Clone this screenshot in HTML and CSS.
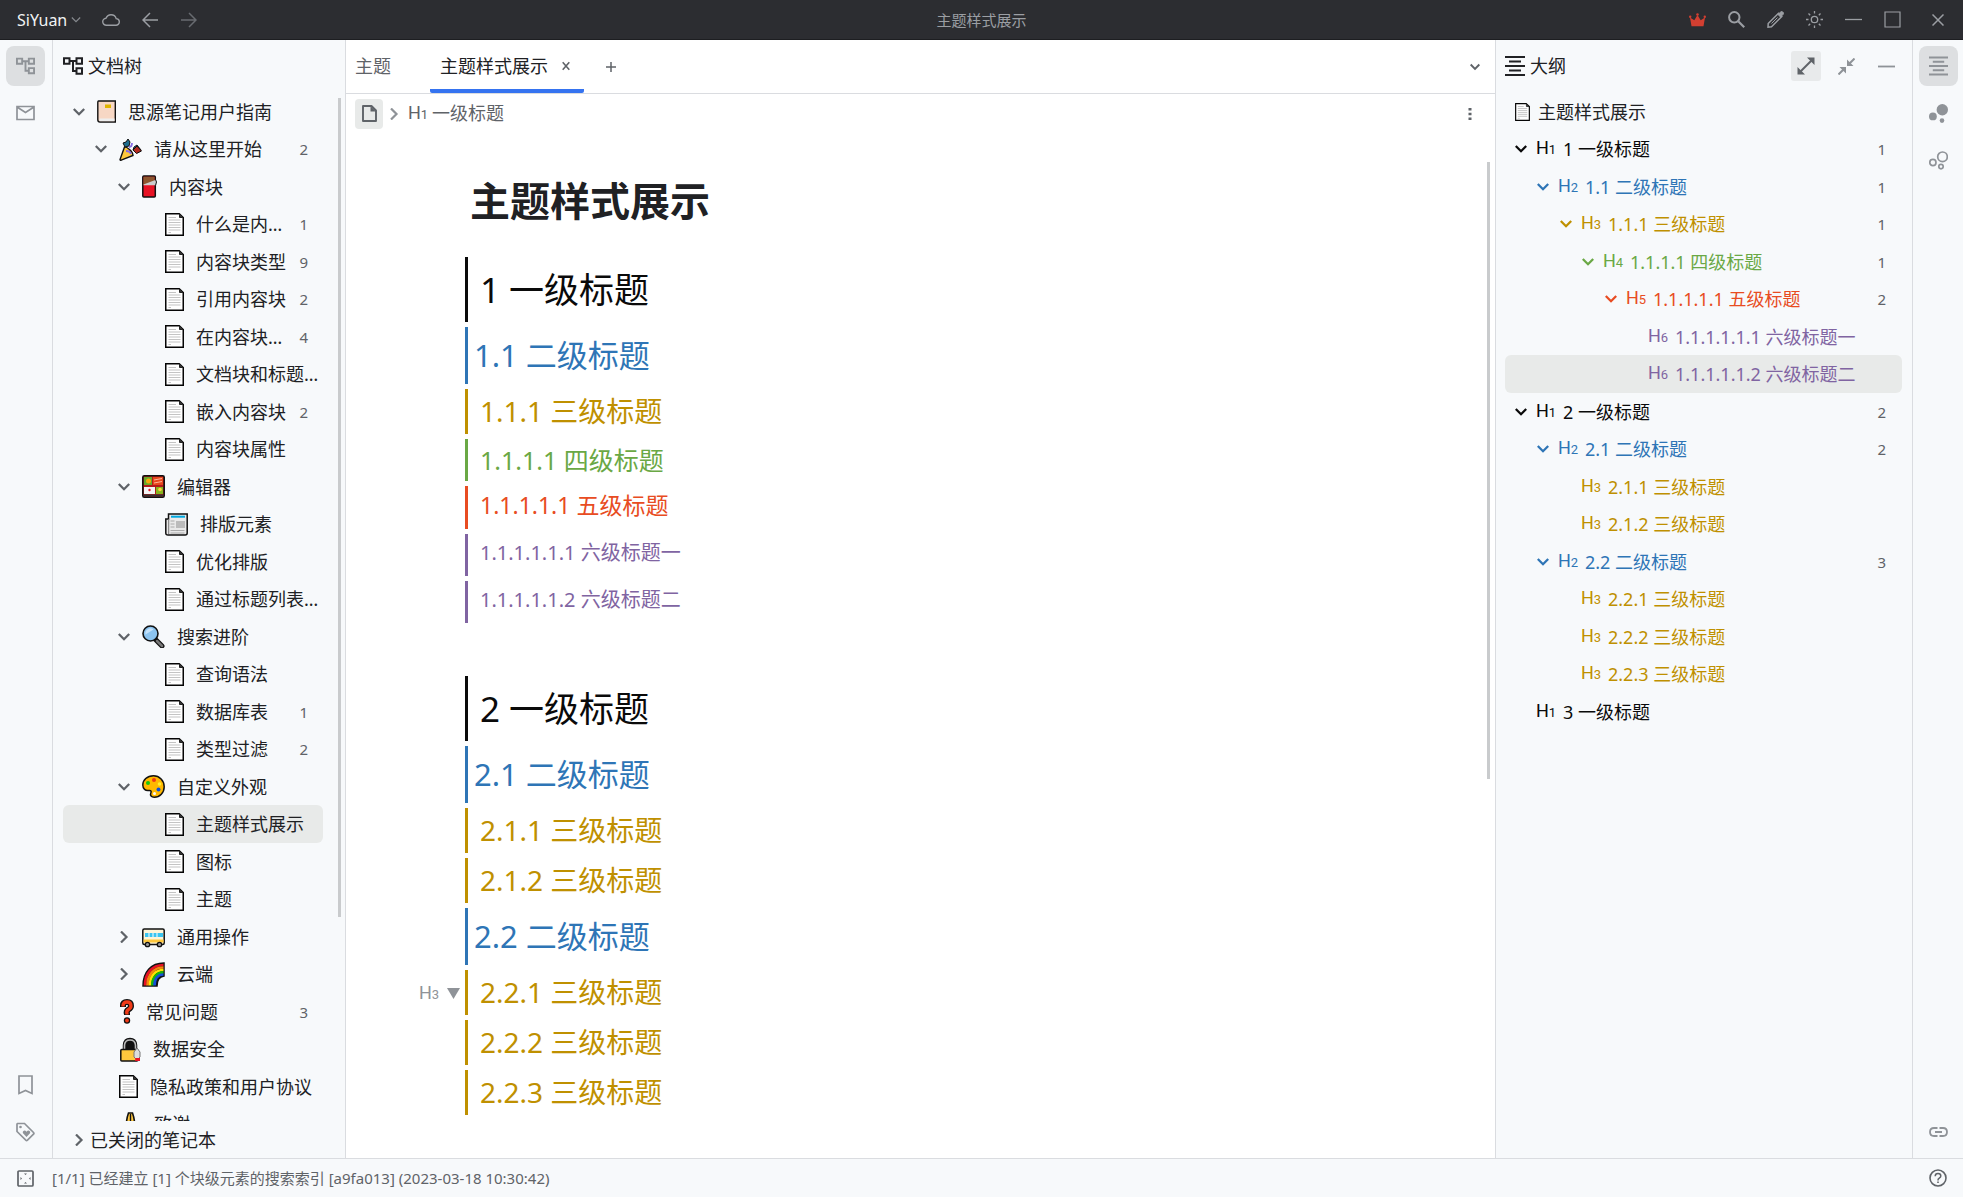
FILE: index.html
```html
<!DOCTYPE html>
<html lang="zh-CN">
<head>
<meta charset="utf-8">
<meta name="viewport" content="width=device-width, initial-scale=1">
<title>主题样式展示 - SiYuan</title>
<link rel="stylesheet" href="styles.css">
</head>
<body>
<svg class="sprite" aria-hidden="true">
  <symbol id="down" viewBox="0 0 12 12"><path d="M.8 3l5.200 5.200L11.200 3" fill="none" stroke="currentColor" stroke-width="2.300"/></symbol>
  <symbol id="right" viewBox="0 0 12 12"><path d="M3 .5L8.500 6 3 11.500" fill="none" stroke="currentColor" stroke-width="2.200"/></symbol>
  <symbol id="tree" viewBox="0 0 20 18"><path d="M1 1.200h5.500v5.500H1zM13.500 1.200H19v5.500h-5.500zM13.500 11.200H19v5.500h-5.500zM6.500 4h7M10 4v10h3.500" fill="none" stroke="currentColor" stroke-width="2"/></symbol>
  <symbol id="outline" viewBox="0 0 20 20"><path d="M0 1h20M4 5.500h12M0 10h20M4 14.500h12M0 19h20" stroke="currentColor" stroke-width="2"/></symbol>
  <symbol id="doc" viewBox="0 0 19 23"><path d="M.75.75h13.500L18.250 4.500v17.750H.75z" fill="#fff" stroke="#050505" stroke-width="1.500"/><path d="M14.500 1v3.500H18" fill="#333" stroke="#222"/><path d="M3.500 4.500H11M3.500 7h12M3.500 9.500h12M3.500 12h12M3.500 14.500h12M3.500 17h12M3.500 19.500H6" stroke="#c4c4c4" stroke-width="1.200"/></symbol>
</svg>

<header class="topbar">
  <div class="top-left">
    <button class="brand">SiYuan <svg width="10" height="10" viewBox="0 0 12 12"><path d="M1 3l5 5 5-5" fill="none" stroke="currentColor" stroke-width="1.500"/></svg></button>
    <button class="top-btn" aria-label="云端同步"><svg width="18" height="12" viewBox="0 0 18 12"><path d="M4.500 11.200h9.300a3.300 3.300 0 0 0 .4-6.600C13.500 2.200 11.500.8 9 .8S4.900 2.100 4 4.200A3.500 3.500 0 0 0 4.500 11.200z" fill="none" stroke="currentColor" stroke-width="1.400"/></svg></button>
    <button class="top-btn" aria-label="后退"><svg width="16" height="16" viewBox="0 0 16 16"><path d="M8 1L1 8l7 7M1 8h15" fill="none" stroke="currentColor" stroke-width="1.500"/></svg></button>
    <button class="top-btn dim" aria-label="前进"><svg width="16" height="16" viewBox="0 0 16 16"><path d="M8 1l7 7-7 7M15 8H0" fill="none" stroke="currentColor" stroke-width="1.500"/></svg></button>
  </div>
  <div class="top-title">主题样式展示</div>
  <div class="top-right">
    <button class="top-btn crown" aria-label="会员"><svg width="17" height="14" viewBox="0 0 17 14"><path d="M2.500 13.200L1 4.500l4.300 2.700L8.500 2l3.200 5.200L16 4.500l-1.500 8.700z" fill="currentColor"/><circle cx="1.200" cy="3.800" r="1.200" fill="currentColor"/><circle cx="8.500" cy="1.500" r="1.300" fill="currentColor"/><circle cx="15.800" cy="3.800" r="1.200" fill="currentColor"/></svg></button>
    <button class="top-btn" aria-label="搜索"><svg width="17" height="17" viewBox="0 0 17 17"><circle cx="6.300" cy="6.300" r="5.200" fill="none" stroke="currentColor" stroke-width="2"/><path d="M10.200 10.200l6 6" stroke="currentColor" stroke-width="2.200"/></svg></button>
    <button class="top-btn" aria-label="编辑"><svg width="17" height="17" viewBox="0 0 17 17"><path d="M1.200 12.500L11.500 2.200l3.300 3.300L4.500 15.800l-3.500.3z" fill="none" stroke="currentColor" stroke-width="1.500"/><path d="M11 3.500L14 .7q.8-.6 1.500.1l.9.9q.6.700 0 1.400L13.500 6zM4.500 12.500l6-6" fill="currentColor" stroke="currentColor"/></svg></button>
    <button class="top-btn" aria-label="外观"><svg width="17" height="17" viewBox="0 0 17 17" fill="none" stroke="currentColor" stroke-width="1.300"><circle cx="8.500" cy="8.500" r="3.200"/><path d="M8.500 0v2.500M8.500 14.500V17M0 8.500h2.500M14.500 8.500H17M2.500 2.500l1.700 1.700M12.800 12.800l1.700 1.700M2.500 14.500l1.700-1.700M12.800 4.200l1.700-1.700"/></svg></button>
    <button class="top-btn" aria-label="最小化"><svg width="17" height="17" viewBox="0 0 17 17"><path d="M0 8.500h17" stroke="currentColor" stroke-width="1.300"/></svg></button>
    <button class="top-btn" aria-label="最大化"><svg width="17" height="17" viewBox="0 0 17 17"><path d="M1 1h15v15H1z" fill="none" stroke="currentColor" stroke-width="1.200"/></svg></button>
    <button class="top-btn close" aria-label="关闭"><svg width="12" height="12" viewBox="0 0 12 12"><path d="M.5.5l11 11M11.500.5l-11 11" stroke="currentColor" stroke-width="1.500"/></svg></button>
  </div>
</header>

<div class="workspace">
  <nav class="dock" aria-label="左侧栏">
    <button class="dock-btn active" aria-label="文档树"><svg width="19" height="18"><use href="#tree"/></svg></button>
    <button class="dock-btn" aria-label="收集箱"><svg width="19" height="16" viewBox="0 0 19 16"><path d="M1 1.500h17v13H1zM1 2l8.500 5.500L18 2" fill="none" stroke="currentColor" stroke-width="1.700"/></svg></button>
    <span class="spacer"></span>
    <button class="dock-btn" aria-label="书签"><svg width="15" height="20" viewBox="0 0 15 20"><path d="M1 1h13v17.500l-6.500-3-6.500 3z" fill="none" stroke="currentColor" stroke-width="1.700"/></svg></button>
    <button class="dock-btn" aria-label="标签"><svg width="19" height="20" viewBox="0 0 19 20"><path d="M1.500 1.500H8.500L17.500 10.500q.8.900 0 1.700l-6 6q-.9.700-1.700 0L1 9.500V2z" fill="none" stroke="currentColor" stroke-width="1.700"/><circle cx="4.500" cy="5" r="1.300" fill="currentColor"/><path d="M10.500 15L7 11.200q-.8-1.400.4-2.300 1.600-.9 3.100.8 1.500-1.700 3.100-.8 1.200.9.400 2.300z" fill="currentColor"/></svg></button>
  </nav>

  <aside class="files">
    <header class="panel-head"><svg width="20" height="18"><use href="#tree"/></svg><h2>文档树</h2></header>
    <ul class="rows tree">
      <li class="row"><svg class="arrow" width="12" height="12"><use href="#down"/></svg><svg class="emoji" width="19" height="23" viewBox="0 0 19 23"><path d="M1.500 1h16.800v21H3q-2.200 0-2.200-2.200V3q0-2 .7-2z" fill="#f7d7c4" stroke="#111" stroke-width="1.400"/><path d="M2.500 18.500h15v2.700H2.500z" fill="#eee"/><rect x="8" y="4.500" width="6" height="3.500" fill="#e0b400"/></svg><span class="name">思源笔记用户指南</span></li>
      <li class="row d1"><svg class="arrow" width="12" height="12"><use href="#down"/></svg><svg class="emoji" width="23" height="23" viewBox="0 0 23 23"><path d="M5.500 9L1 21.500q0 1 1.200.7L14 17.500q0-3-3.500-6T5.500 9z" fill="#ffc83d" stroke="#111" stroke-width="1.400"/><path d="M4 5l3-1 2-3 2 3-1 4-4 1zM14 12l1-3 3-2 4 5-4 3z" fill="#1d6d8e" stroke="#111"/><path d="M14 12l4-4 4.500 5-5 2.500z" fill="#b3281e" stroke="#111"/><path d="M10 9q3 0 3-4M7 13q4 0 5 3" fill="none" stroke="#886ce4" stroke-width="1.800"/></svg><span class="name">请从这里开始</span><span class="count">2</span></li>
      <li class="row d2"><svg class="arrow" width="12" height="12"><use href="#down"/></svg><svg class="emoji" width="15" height="23" viewBox="0 0 15 23"><rect x=".8" y="1" width="12.500" height="21" rx="1" fill="#e81224" stroke="#111" stroke-width="1.500"/><path d="M1.500 1.700h11v6l-11 2z" fill="#8e562e"/><path d="M1.500 9.500L14 4.700v5.500H1.500z" fill="#ccc"/><path d="M13.500 4.500q2 2 0 6" fill="none" stroke="#111"/></svg><span class="name">内容块</span></li>
      <li class="row d3"><svg class="emoji" width="19" height="23"><use href="#doc"/></svg><span class="name">什么是内…</span><span class="count">1</span></li>
      <li class="row d3"><svg class="emoji" width="19" height="23"><use href="#doc"/></svg><span class="name">内容块类型</span><span class="count">9</span></li>
      <li class="row d3"><svg class="emoji" width="19" height="23"><use href="#doc"/></svg><span class="name">引用内容块</span><span class="count">2</span></li>
      <li class="row d3"><svg class="emoji" width="19" height="23"><use href="#doc"/></svg><span class="name">在内容块…</span><span class="count">4</span></li>
      <li class="row d3"><svg class="emoji" width="19" height="23"><use href="#doc"/></svg><span class="name">文档块和标题…</span></li>
      <li class="row d3"><svg class="emoji" width="19" height="23"><use href="#doc"/></svg><span class="name">嵌入内容块</span><span class="count">2</span></li>
      <li class="row d3"><svg class="emoji" width="19" height="23"><use href="#doc"/></svg><span class="name">内容块属性</span></li>
      <li class="row d2"><svg class="arrow" width="12" height="12"><use href="#down"/></svg><svg class="emoji" width="23" height="23" viewBox="0 0 23 23"><rect x=".8" y=".8" width="21.400" height="21.400" rx="1.500" fill="#b31b1b" stroke="#111" stroke-width="1.600"/><path d="M2 2h8v8H2z" fill="#6aa82a"/><path d="M11 2h10v8H11z" fill="#e8461c"/><path d="M2 12h11v7H2z" fill="#f5f5f5"/><path d="M14 12h7v7h-7z" fill="#86b51d"/><path d="M1.500 19.500h20v2h-20z" fill="#333"/><circle cx="6.500" cy="6" r="2.500" fill="#f7a70a"/><circle cx="7.500" cy="15" r="1.200" fill="#e81224"/><circle cx="18" cy="14.500" r="1.800" fill="#ffd23d"/><path d="M12 5l8-1.500M12 8l8-1.500" stroke="#ffb49a"/></svg><span class="name">编辑器</span></li>
      <li class="row d3"><svg class="emoji" width="23" height="23" viewBox="0 0 23 23"><path d="M3.500 1h18.700v19q0 2-2 2H3q-2.200 0-2.200-2V6h2.700z" fill="#e9e9e9" stroke="#111" stroke-width="1.500"/><path d="M6 3.700h14" stroke="#00a8e0" stroke-width="2"/><path d="M5.500 8h4M5.500 11h4M5.500 14h4M5.500 17.500h14M5.500 20h14" stroke="#aaa"/><path d="M11 8h9v7h-9z" fill="#bbb"/><path d="M3.700 6v15" stroke="#777"/></svg><span class="name">排版元素</span></li>
      <li class="row d3"><svg class="emoji" width="19" height="23"><use href="#doc"/></svg><span class="name">优化排版</span></li>
      <li class="row d3"><svg class="emoji" width="19" height="23"><use href="#doc"/></svg><span class="name">通过标题列表…</span></li>
      <li class="row d2"><svg class="arrow" width="12" height="12"><use href="#down"/></svg><svg class="emoji" width="23" height="23" viewBox="0 0 23 23"><path d="M12.500 13.500l7.500 7.500" stroke="#111" stroke-width="5" stroke-linecap="round"/><path d="M15 16l5 5" stroke="#777" stroke-width="2.500" stroke-linecap="round"/><circle cx="8.500" cy="8.500" r="7.500" fill="#8cc4f0" stroke="#111" stroke-width="1.600"/><path d="M3.500 9.500a5 5 0 0 1 8-5z" fill="#c4e2fa"/></svg><span class="name">搜索进阶</span></li>
      <li class="row d3"><svg class="emoji" width="19" height="23"><use href="#doc"/></svg><span class="name">查询语法</span></li>
      <li class="row d3"><svg class="emoji" width="19" height="23"><use href="#doc"/></svg><span class="name">数据库表</span><span class="count">1</span></li>
      <li class="row d3"><svg class="emoji" width="19" height="23"><use href="#doc"/></svg><span class="name">类型过滤</span><span class="count">2</span></li>
      <li class="row d2"><svg class="arrow" width="12" height="12"><use href="#down"/></svg><svg class="emoji" width="23" height="23" viewBox="0 0 23 23"><path d="M11.500.8C5 .8.8 5 .8 10c0 4 2.700 6 6 5.500 2-.3 3 .5 2 2.500-1 2.500.5 4.200 3.500 4.200 5.500 0 9.900-4.500 9.900-10.500S17.500.8 11.500.8z" fill="#ffb900" stroke="#111" stroke-width="1.500"/><circle cx="6" cy="8" r="2" fill="#16c60c"/><circle cx="12" cy="5" r="2" fill="#f03a17"/><circle cx="17.500" cy="9" r="1.800" fill="#ffef30"/><circle cx="16.500" cy="14.500" r="2" fill="#0f50d8"/><circle cx="12.500" cy="18.500" r="1.500" fill="#f7f8fa"/></svg><span class="name">自定义外观</span></li>
      <li class="row d3 selected"><svg class="emoji" width="19" height="23"><use href="#doc"/></svg><span class="name">主题样式展示</span></li>
      <li class="row d3"><svg class="emoji" width="19" height="23"><use href="#doc"/></svg><span class="name">图标</span></li>
      <li class="row d3"><svg class="emoji" width="19" height="23"><use href="#doc"/></svg><span class="name">主题</span></li>
      <li class="row d2"><svg class="arrow" width="12" height="12"><use href="#right"/></svg><svg class="emoji" width="23" height="23" viewBox="0 0 23 23"><rect x=".8" y="4" width="21.400" height="15.500" rx="1.500" fill="#fff5d8" stroke="#111" stroke-width="1.500"/><path d="M3 8h18v4H3z" fill="#3bc5f0"/><path d="M7 8v4M11 8v4M15 8v4" stroke="#fff"/><path d="M1.600 14.500h20v3h-20z" fill="#ffc83d"/><circle cx="5.500" cy="19.500" r="2.200" fill="#999" stroke="#111" stroke-width="1.300"/><circle cx="17.500" cy="19.500" r="2.200" fill="#999" stroke="#111" stroke-width="1.300"/></svg><span class="name">通用操作</span></li>
      <li class="row d2"><svg class="arrow" width="12" height="12"><use href="#right"/></svg><svg class="emoji" width="23" height="25" viewBox="0 0 23 25"><path d="M1 24C1 10 9 1 22 1v13q-7 1-7 10z" fill="#111" stroke="#111" stroke-width="1.500"/><g fill="none" stroke-width="2.700"><path d="M3 23.500C3 11 10 3 21.500 3" stroke="#e81224"/><path d="M5.500 23.500C5.500 12.500 12 5.500 21.500 5.500" stroke="#f7830f"/><path d="M8 23.500C8 14 13.500 8 21.500 8" stroke="#ffe100"/><path d="M10.300 23.500C10.300 15.500 15 10.300 21.500 10.300" stroke="#16b50c"/><path d="M12.500 23.500C12.500 16.500 16 12.500 21.500 12.500" stroke="#1550d8"/></g></svg><span class="name">云端</span></li>
      <li class="row d1"><i class="arrow"></i><svg class="emoji" width="15" height="25" viewBox="0 0 15 25"><g transform="translate(1 0)"><path d="M3 8V6.500Q3 3 7 3t4 4q0 2-2.500 3.500T7 15v1" fill="none" stroke="#111" stroke-width="6"/><circle cx="7" cy="21.500" r="3.200" fill="#111"/><path d="M3 7.500V6.500Q3 3 7 3t4 4q0 2-2.500 3.500T7 15v.500" fill="none" stroke="#f03a17" stroke-width="3.300"/><circle cx="7" cy="21.500" r="1.900" fill="#f03a17"/></g></svg><span class="name">常见问题</span><span class="count">3</span></li>
      <li class="row d1"><i class="arrow"></i><svg class="emoji" width="22" height="25" viewBox="0 0 22 25"><g transform="translate(1 0)"><path d="M3.500 13V8Q4 1.500 10 1.500T16.500 8v5z" fill="#111" stroke="#111" stroke-width="1.500"/><path d="M4.500 12V8Q5 3 10 3t5.500 5v4" fill="none" stroke="#bbb" stroke-width="1.600"/><rect x=".8" y="12.500" width="17" height="11.500" rx="1" fill="#ffc83d" stroke="#111" stroke-width="1.500"/><path d="M17 11l3 4v5l-3 3-3-3v-5z" fill="#ddd" stroke="#777"/><path d="M15.500 21h4.500v3h-5z" fill="#e81224"/></g></svg><span class="name">数据安全</span></li>
      <li class="row d1"><i class="arrow"></i><svg class="emoji" width="19" height="23"><use href="#doc"/></svg><span class="name">隐私政策和用户协议</span></li>
      <li class="row d1"><i class="arrow"></i><svg class="emoji" width="23" height="25" viewBox="0 0 23 25"><path d="M11.500 1H9.500Q8 5 7.500 10L3 20l3 4h11l3-4-4.500-10Q15 5 13.500 1z" fill="#ffc83d" stroke="#111" stroke-width="1.600"/><path d="M11.500 2v18" stroke="#111" stroke-width="1.400"/></svg><span class="name">致谢</span></li>
    </ul>
    <button class="closed"><svg width="12" height="12"><use href="#right"/></svg>已关闭的笔记本</button>
    <span class="thumb"></span>
  </aside>

  <main class="editor">
    <div class="tabs" role="tablist">
      <button class="tab" role="tab">主题</button>
      <button class="tab current" role="tab" aria-selected="true">主题样式展示 <svg width="8" height="10" viewBox="0 0 8 10"><path d="M.7 1.200l6.600 7.600M7.300 1.200L.7 8.800" stroke="currentColor" stroke-width="1.600"/></svg></button>
      <button class="icon-btn add" aria-label="新建"><svg width="10" height="10" viewBox="0 0 10 10"><path d="M5 0v10M0 5h10" stroke="currentColor" stroke-width="1.500"/></svg></button>
      <span class="spacer"></span>
      <button class="icon-btn" aria-label="切换页签"><svg width="10" height="10"><use href="#down" width="10" height="10"/></svg></button>
    </div>
    <div class="crumbs">
      <button class="doc-btn" aria-label="文档"><svg width="15" height="17" viewBox="0 0 15 17"><path d="M1 1h8.500L14 5.500V16H1z" fill="none" stroke="currentColor" stroke-width="1.900" stroke-linejoin="round"/><path d="M8.500 1v5.500H14z" fill="currentColor"/></svg></button>
      <svg class="sep" width="12" height="12"><use href="#right"/></svg>
      <a class="crumb" href="#h1"><span class="hl">H<small>1</small></span>一级标题</a>
      <span class="spacer"></span>
      <button class="icon-btn" aria-label="更多"><svg width="4" height="12" viewBox="0 0 4 12"><path d="M.5 0h3v2.600h-3zM.5 4.700h3v2.600h-3zM.5 9.400h3V12h-3z" fill="currentColor"/></svg></button>
    </div>
    <article class="content">
      <h1 class="title">主题样式展示</h1>
      <h1 class="h l1" id="h1">1 一级标题</h1>
      <h2 class="h l2">1.1 二级标题</h2>
      <h3 class="h l3">1.1.1 三级标题</h3>
      <h4 class="h l4">1.1.1.1 四级标题</h4>
      <h5 class="h l5">1.1.1.1.1 五级标题</h5>
      <h6 class="h l6">1.1.1.1.1.1 六级标题一</h6>
      <h6 class="h l6">1.1.1.1.1.2 六级标题二</h6>
      <p class="blank"></p>
      <h1 class="h l1">2 一级标题</h1>
      <h2 class="h l2">2.1 二级标题</h2>
      <h3 class="h l3">2.1.1 三级标题</h3>
      <h3 class="h l3">2.1.2 三级标题</h3>
      <h2 class="h l2">2.2 二级标题</h2>
      <h3 class="h l3">2.2.1 三级标题<span class="gutter"><span class="hl">H<small>3</small></span><svg width="13" height="11" viewBox="0 0 13 11"><path d="M0 0h13L6.500 11z" fill="currentColor"/></svg></span></h3>
      <h3 class="h l3">2.2.2 三级标题</h3>
      <h3 class="h l3">2.2.3 三级标题</h3>
    </article>
    <span class="thumb"></span>
  </main>

  <aside class="outline">
    <header class="panel-head">
      <svg width="20" height="20"><use href="#outline"/></svg><h2>大纲</h2>
      <span class="spacer"></span>
      <button class="tool on" aria-label="展开"><svg width="18" height="18" viewBox="0 0 18 18"><path d="M10 .5h7.500V8zM.5 10v7.500H8z" fill="currentColor"/><path d="M15 3L3 15" stroke="currentColor" stroke-width="2"/></svg></button>
      <button class="tool" aria-label="折叠"><svg width="17" height="17" viewBox="0 0 17 17"><path d="M9 1.500V8h6.500zM1.500 9H8v6.500z" fill="currentColor"/><path d="M16.500.5L10.500 6.500M.5 16.500l6-6" stroke="currentColor" stroke-width="2"/></svg></button>
      <button class="tool" aria-label="最小化"><svg width="17" height="17" viewBox="0 0 17 17"><path d="M0 8.500h17" stroke="currentColor" stroke-width="1.800"/></svg></button>
    </header>
    <ul class="rows">
      <li class="row root"><svg width="15" height="18"><use href="#doc"/></svg><span class="name">主题样式展示</span></li>
      <li class="row c1"><svg class="arrow" width="12" height="12"><use href="#down"/></svg><span class="hl">H<small>1</small></span><span class="name">1 一级标题</span><span class="count">1</span></li>
      <li class="row d1 c2"><svg class="arrow" width="12" height="12"><use href="#down"/></svg><span class="hl">H<small>2</small></span><span class="name">1.1 二级标题</span><span class="count">1</span></li>
      <li class="row d2 c3"><svg class="arrow" width="12" height="12"><use href="#down"/></svg><span class="hl">H<small>3</small></span><span class="name">1.1.1 三级标题</span><span class="count">1</span></li>
      <li class="row d3 c4"><svg class="arrow" width="12" height="12"><use href="#down"/></svg><span class="hl">H<small>4</small></span><span class="name">1.1.1.1 四级标题</span><span class="count">1</span></li>
      <li class="row d4 c5"><svg class="arrow" width="12" height="12"><use href="#down"/></svg><span class="hl">H<small>5</small></span><span class="name">1.1.1.1.1 五级标题</span><span class="count">2</span></li>
      <li class="row d5 c6"><i class="arrow"></i><span class="hl">H<small>6</small></span><span class="name">1.1.1.1.1.1 六级标题一</span></li>
      <li class="row d5 c6 selected"><i class="arrow"></i><span class="hl">H<small>6</small></span><span class="name">1.1.1.1.1.2 六级标题二</span></li>
      <li class="row c1"><svg class="arrow" width="12" height="12"><use href="#down"/></svg><span class="hl">H<small>1</small></span><span class="name">2 一级标题</span><span class="count">2</span></li>
      <li class="row d1 c2"><svg class="arrow" width="12" height="12"><use href="#down"/></svg><span class="hl">H<small>2</small></span><span class="name">2.1 二级标题</span><span class="count">2</span></li>
      <li class="row d2 c3"><i class="arrow"></i><span class="hl">H<small>3</small></span><span class="name">2.1.1 三级标题</span></li>
      <li class="row d2 c3"><i class="arrow"></i><span class="hl">H<small>3</small></span><span class="name">2.1.2 三级标题</span></li>
      <li class="row d1 c2"><svg class="arrow" width="12" height="12"><use href="#down"/></svg><span class="hl">H<small>2</small></span><span class="name">2.2 二级标题</span><span class="count">3</span></li>
      <li class="row d2 c3"><i class="arrow"></i><span class="hl">H<small>3</small></span><span class="name">2.2.1 三级标题</span></li>
      <li class="row d2 c3"><i class="arrow"></i><span class="hl">H<small>3</small></span><span class="name">2.2.2 三级标题</span></li>
      <li class="row d2 c3"><i class="arrow"></i><span class="hl">H<small>3</small></span><span class="name">2.2.3 三级标题</span></li>
      <li class="row c1"><i class="arrow"></i><span class="hl">H<small>1</small></span><span class="name">3 一级标题</span></li>
    </ul>
  </aside>

  <nav class="dock dock-right" aria-label="右侧栏">
    <button class="dock-btn active" aria-label="大纲"><svg width="19" height="20"><use href="#outline" width="19" height="20"/></svg></button>
    <button class="dock-btn" aria-label="关系图"><svg width="19" height="19" viewBox="0 0 19 19" fill="currentColor"><circle cx="13.300" cy="5.800" r="5.700"/><circle cx="3.900" cy="12.400" r="3.900"/><circle cx="13" cy="16.600" r="2.300"/></svg></button>
    <button class="dock-btn" aria-label="全局关系图"><svg width="19" height="19" viewBox="0 0 19 19" fill="none" stroke="currentColor" stroke-width="1.700"><circle cx="13.500" cy="5.800" r="4.800"/><circle cx="3.900" cy="11.500" r="3.100"/><circle cx="12" cy="15.600" r="2.200"/></svg></button>
    <span class="spacer"></span>
    <button class="dock-btn" aria-label="反向链接"><svg width="19" height="10" viewBox="0 0 19 10"><path d="M8.500 1H5Q1 1 1 5t4 4h3.500M10.500 1H14q4 0 4 4t-4 4h-3.500M6 5h7" fill="none" stroke="currentColor" stroke-width="1.800"/></svg></button>
  </nav>
</div>

<footer class="status">
  <button class="status-btn" aria-label="停靠栏"><svg width="17" height="17" viewBox="0 0 17 17"><rect x="1" y="1" width="15" height="15" rx="1" fill="none" stroke="currentColor" stroke-width="1.700"/><path d="M7 3.500h3L8.500 5zM7 13.500h3L8.500 12zM3.500 7v3L5 8.500zM13.500 7v3L12 8.500z" fill="currentColor"/></svg></button>
  <span>[1/1] 已经建立 [1] 个块级元素的搜索索引 [a9fa013] (2023-03-18 10:30:42)</span>
  <span class="spacer"></span>
  <button class="status-btn" aria-label="帮助"><svg width="18" height="18" viewBox="0 0 18 18"><circle cx="9" cy="9" r="8" fill="none" stroke="currentColor" stroke-width="1.600"/><path d="M6.200 7.200Q6.200 4.500 9 4.500t2.800 2.500Q11.800 8.300 10.300 9.200T9 11.500" fill="none" stroke="currentColor" stroke-width="1.500"/><path d="M8.200 12.500h1.600v1.600H8.200z" fill="currentColor"/></svg></button>
</footer>
</body>
</html>
```
FILE: styles.css
```css
:root {
  --panel: #f7f9fb;
  --line: #dadce0;
  --text: #202124;
  --muted: #5f6368;
  --icon: #8f9398;
  --select: #e8eae9;
  --h1: #0a0a0a;
  --h2: #2e75b6;
  --h3: #bf9000;
  --h4: #6aa845;
  --h5: #e84c22;
  --h6: #8064a2;
}

* { box-sizing: border-box; }

body {
  margin: 0;
  height: 100vh;
  display: flex;
  flex-direction: column;
  overflow: hidden;
  background: #fff;
  color: var(--text);
  font-family: "Noto Sans", "Noto Sans CJK SC", sans-serif;
  font-size: 18px;
  line-height: 26px;
}

button {
  margin: 0;
  padding: 0;
  border: 0;
  background: none;
  color: inherit;
  font: inherit;
  display: flex;
  align-items: center;
  justify-content: center;
  white-space: nowrap;
}

svg { flex: none; display: block; }
.sprite { display: none; }
.spacer { flex: 1; }

/* Title bar */
.topbar {
  flex: none;
  height: 40px;
  display: grid;
  grid-template-columns: 1fr auto 1fr;
  align-items: center;
  background: #2c2d31;
  border-bottom: 1px solid #1d1e21;
  color: #9b9ea3;
}
.top-left, .top-right { display: flex; align-items: center; }
.top-left { padding-left: 17px; }
.top-right { justify-content: flex-end; padding-right: 7px; }
.brand { gap: 4px; color: #f1f3f4; font-size: 16px; margin-right: 10px; }
.brand svg { color: #85888d; }
.top-btn { width: 39px; height: 38px; }
.top-btn.dim { color: #686b70; }
.top-btn.crown { color: #d23f31; }
.top-btn.close { width: 36px; margin-left: 8px; }
.top-title { font-size: 15px; }

.workspace { flex: 1; min-height: 0; display: flex; }

/* Docks */
.dock {
  flex: none;
  width: 53px;
  display: flex;
  flex-direction: column;
  gap: 7px;
  padding: 6px 7px 6px 6px;
  background: var(--panel);
  border-right: 1px solid var(--line);
}
.dock-right { width: 51px; padding: 6px 5px 6px 6px; border-right: 0; border-left: 1px solid var(--line); }
.dock-btn { width: 39px; height: 40px; border-radius: 8px; color: var(--icon); }
.dock-btn.active { background: #dddfe1; }

/* Side panels */
.files, .outline {
  flex: none;
  display: flex;
  flex-direction: column;
  background: var(--panel);
}
.files { position: relative; width: 293px; border-right: 1px solid var(--line); }
.outline { width: 417px; border-left: 1px solid var(--line); }

.panel-head {
  flex: none;
  height: 53px;
  display: flex;
  align-items: center;
  gap: 5px;
  padding: 0 10px 1px;
}
.panel-head h2 { margin: 0; font-size: 18px; font-weight: 400; }
.tool { width: 30px; height: 30px; margin-left: 5px; border-radius: 3px; color: var(--icon); }
.tool.on { background: #e8eaeb; color: var(--muted); }

.rows { list-style: none; margin: 0; padding: 0 10px; }
.tree { flex: 1; min-height: 0; overflow: hidden; padding-right: 22px; }
.row {
  height: 37px;
  display: flex;
  align-items: center;
  padding: 0 15px 0 10px;
  border-radius: 6px;
  white-space: nowrap;
}
.row:nth-child(even) { height: 38px; }
.row.selected { background: var(--select); }
.arrow { flex: none; width: 12px; margin-right: 12px; color: var(--muted); }
.emoji { margin-right: 12px; }
.name { flex: 1; }
.count { color: var(--muted); font-size: 15px; }
.row.d1 { padding-left: 32px; }
.row.d2 { padding-left: 55px; }
.row.d3 { padding-left: 77px; }
.row.d4 { padding-left: 100px; }
.row.d5 { padding-left: 122px; }
.tree .row.d3 { padding-left: 102px; padding-right: 0; }
.tree .row.d3 .count { margin-right: 15px; }

.outline .panel-head { padding: 0 11px 1px 9px; }
.outline .rows { padding-left: 9px; }
.outline .row { padding-right: 16px; }
.outline .arrow { margin-right: 9px; color: inherit; }
.outline .hl { margin-right: 8px; }
.outline .root svg { margin-right: 8px; }
.c1 { color: var(--h1); }
.c2 { color: var(--h2); }
.c3 { color: var(--h3); }
.c4 { color: var(--h4); }
.c5 { color: var(--h5); }
.c6 { color: var(--h6); }

.hl {
  display: inline-block;
  width: 19px;
  font-family: Roboto, sans-serif;
  font-size: 18px;
  font-weight: 400;
  white-space: nowrap;
}
.hl small { font-size: 13px; }

.closed {
  flex: none;
  height: 37px;
  justify-content: flex-start;
  gap: 5px;
  padding-left: 20px;
}
.closed svg { color: var(--muted); }

.thumb { position: absolute; width: 3px; background: #c9cbcd; }
.files .thumb { top: 58px; right: 4px; height: 819px; }
.editor .thumb { top: 122px; right: 5px; height: 617px; }

/* Editor */
.editor { flex: 1; min-width: 0; position: relative; display: flex; flex-direction: column; overflow: hidden; }
.tabs {
  flex: none;
  height: 54px;
  display: flex;
  padding: 0 5px 0 9px;
  border-bottom: 1px solid var(--line);
  color: var(--muted);
}
.tab { margin-right: 39px; border-bottom: 4px solid transparent; border-top: 2px solid transparent; }
.tab.current { gap: 14px; margin-right: 8px; padding: 0 14px 0 10px; color: var(--text); border-bottom-color: #3573f0; border-radius: 0 0 2px 2px; }
.tab.current svg { color: var(--muted); }
.icon-btn { width: 30px; color: var(--muted); }
.add { width: 38px; }

.crumbs {
  flex: none;
  height: 39px;
  display: flex;
  align-items: center;
  padding: 0 10px 0 9px;
  color: var(--muted);
}
.doc-btn { width: 28px; height: 30px; border-radius: 4px; background: var(--select); }
.sep { margin: 0 8px 0 5px; color: var(--icon); }
.crumb { display: flex; gap: 5px; color: inherit; text-decoration: none; }
.crumbs .icon-btn { height: 30px; }

.content {
  flex: 1;
  min-height: 0;
  display: flex;
  flex-direction: column;
  gap: 5px;
  padding: 39px 119px 0;
}
.title { flex: none; margin: 0 0 23px; padding-left: 5px; font-size: 40px; line-height: 57px; font-weight: 700; }
.h {
  flex: none;
  position: relative;
  margin: 0;
  padding-left: 12px;
  border-left: 3px solid currentColor;
  font-weight: 400;
}
.l1 { color: var(--h1); font-size: 35px; line-height: 65px; }
.l2 { color: var(--h2); font-size: 31px; line-height: 57px; padding-left: 6px; }
.l3 { color: var(--h3); font-size: 28px; line-height: 45px; }
.l4 { color: var(--h4); font-size: 25px; line-height: 42px; }
.l5 { color: var(--h5); font-size: 23px; line-height: 39px; padding-bottom: 4px; }
.l6 { color: var(--h6); font-size: 20px; line-height: 37px; padding-bottom: 5px; }
.blank { flex: none; margin: 0; height: 43px; }

.gutter {
  position: absolute;
  top: 0;
  right: 100%;
  display: flex;
  align-items: center;
  gap: 9px;
  padding-right: 8px;
  color: var(--icon);
}

/* Status bar */
.status {
  flex: none;
  height: 39px;
  display: flex;
  align-items: center;
  gap: 18px;
  padding: 0 16px 0 17px;
  background: var(--panel);
  border-top: 1px solid var(--line);
  color: var(--muted);
  font-size: 15px;
}
```
